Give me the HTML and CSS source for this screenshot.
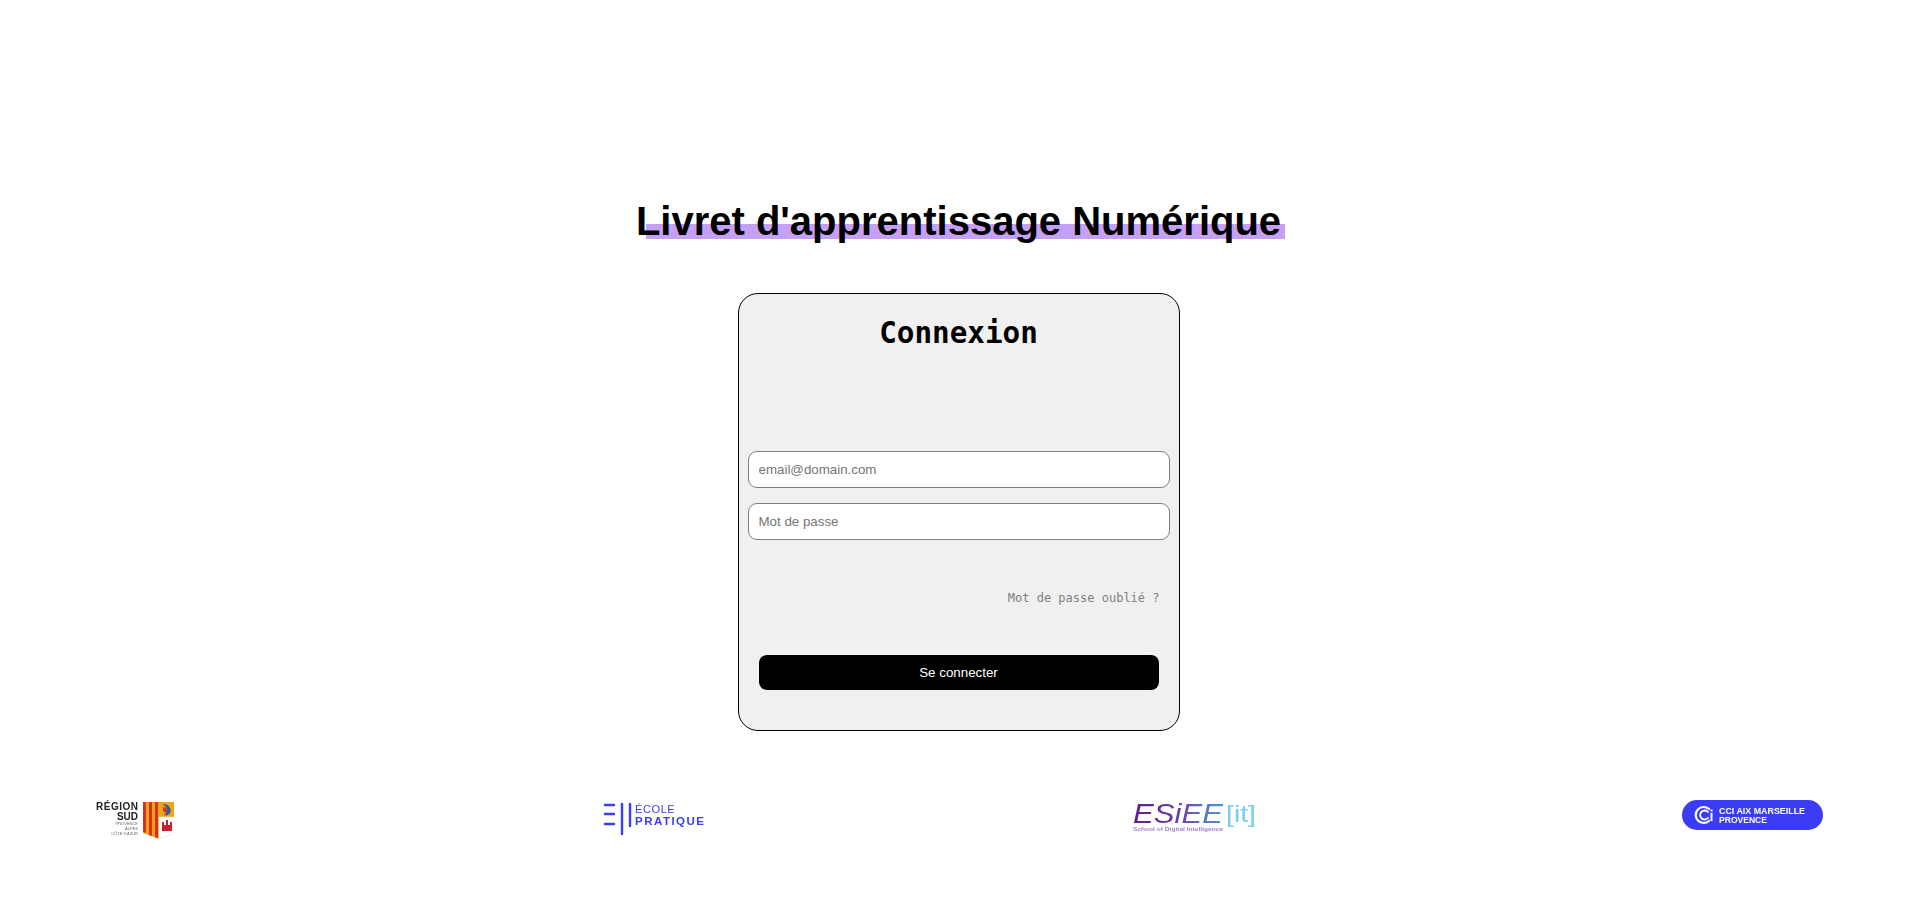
FILE: index.html
```html
<!DOCTYPE html>
<html lang="fr">
<head>
  <meta charset="UTF-8">
  <title>Livret d'apprentissage Numérique</title>
  <link rel="stylesheet" href="styles.css">
</head>
<body>
  <main class="page">
    <h1 class="title">Livret d'apprentissage Numérique</h1>

    <form class="card">
      <h2 class="card-title">Connexion</h2>
      <div class="fields">
        <input class="field" type="email" placeholder="email@domain.com">
        <input class="field" type="password" placeholder="Mot de passe">
      </div>
      <a class="forgot" href="#">Mot de passe oublié ?</a>
      <button class="submit" type="button">Se connecter</button>
    </form>
  </main>

  <footer class="partners">
    <!-- Region Sud -->
    <svg class="logo" width="80" height="40" viewBox="0 0 80 40">
      <text class="region-name" x="43" y="10" text-anchor="end" textLength="42">RÉGION</text>
      <text class="region-name" x="43" y="19.5" text-anchor="end">SUD</text>
      <text class="region-small" x="43" y="25" text-anchor="end">PROVENCE</text>
      <text class="region-small" x="43" y="30" text-anchor="end">ALPES</text>
      <text class="region-small" x="43" y="35" text-anchor="end">CÔTE D'AZUR</text>
      <path d="M48 2h31v31l-15 6-16-6z" fill="#f3a31a"/>
      <path d="M48 2h3v31l-3-1zM54 2h3v34l-3-1zM60 2h3v36l-3-1z" fill="#d8321f"/>
      <path d="M51 2h3v33l-3-1zM57 2h3v35l-3-1z" fill="#f2a01c"/>
      <path d="M64 17h15v16l-15 6z" fill="#fff" stroke="#eee" stroke-width="0.5"/>
      <path d="M67 25h10v6h-10z" fill="#c8202c"/>
      <path d="M67 22h2v3h-2zM71 20h2v5h-2zM75 22h2v3h-2z" fill="#c8202c"/>
      <path d="M67 5a6 6 0 0 1 8 8 5 5 0 0 1-6 2 6 6 0 0 0 3-5 5 5 0 0 0-5-5z" fill="#2c5aa0"/>
      <path d="M68 7a4 4 0 0 1 4 3 4 4 0 0 1-1 3l-3-2z" fill="#d8321f"/>
    </svg>

    <!-- Ecole Pratique -->
    <svg class="logo" width="102" height="40" viewBox="0 0 102 40">
      <g stroke="#3a3df5" stroke-width="2.4" stroke-linecap="round">
        <path d="M3 5h9M3 14h9M3 24h9"/>
        <path d="M20 4v30M28 4v22"/>
      </g>
      <text class="ecole" x="33" y="13">ÉCOLE</text>
      <text class="pratique" x="33" y="25" textLength="69">PRATIQUE</text>
    </svg>

    <!-- ESIEE-IT -->
    <svg class="logo" width="124" height="40" viewBox="0 0 124 40">
      <defs>
        <linearGradient id="esieeFill" x1="0" y1="0" x2="1" y2="0">
          <stop offset="0" stop-color="#5b1f8f"/>
          <stop offset="0.5" stop-color="#6a3fa8"/>
          <stop offset="1" stop-color="#4f9ad8"/>
        </linearGradient>
      </defs>
      <text class="esiee" x="2" y="23" textLength="90" lengthAdjust="spacingAndGlyphs" fill="url(#esieeFill)">ESiEE</text>
      <text class="esiee-it" x="95" y="22" textLength="30" lengthAdjust="spacingAndGlyphs">[it]</text>
      <text class="esiee-sub" x="2" y="31" textLength="90" lengthAdjust="spacingAndGlyphs">School of Digital Intelligence</text>
    </svg>

    <!-- CCI -->
    <svg class="logo" width="141" height="40" viewBox="0 0 141 40">
      <rect x="0" y="0" width="141" height="30" rx="15" fill="#3a3df5"/>
      <g fill="none" stroke="#fff" stroke-linecap="round">
        <path d="M27 9a8 8 0 1 0 0 12" stroke-width="2.2"/>
        <path d="M26 12a4.5 4.5 0 1 0 0 6" stroke-width="1.8"/>
      </g>
      <path d="M28.5 13h2v8h-2zM28.5 9.5h2v2h-2z" fill="#fff"/>
      <text class="cci" x="37" y="13.5" textLength="86" lengthAdjust="spacingAndGlyphs">CCI AIX MARSEILLE</text>
      <text class="cci" x="37" y="23" textLength="48" lengthAdjust="spacingAndGlyphs">PROVENCE</text>
    </svg>
  </footer>
</body>
</html>
```

FILE: styles.css
```css
body {
  margin: 0;
  background: #fff;
  color: #000;
  font-family: "Liberation Sans", Arial, sans-serif;
}
.page {
  display: flex;
  flex-direction: column;
  align-items: center;
  padding-top: 198px;
}
.title {
  position: relative;
  z-index: 0;
  margin: 0 0 49px 0;
  font-size: 40px;
  line-height: 46px;
  font-weight: bold;
}
.title::after {
  content: "";
  position: absolute;
  z-index: -1;
  left: 10px;
  right: -4px;
  bottom: 5px;
  height: 15px;
  background: #c6a0f6;
}
.card {
  box-sizing: border-box;
  width: 442px;
  height: 438px;
  padding: 22px 9px 0 9px;
  display: flex;
  flex-direction: column;
  background: #f0f0f0;
  border: 1px solid #000;
  border-radius: 20px;
}
.card-title {
  margin: 0;
  text-align: center;
  font-family: "DejaVu Sans Mono", monospace;
  font-size: 29.3px;
  line-height: 34px;
  font-weight: bold;
}
.fields {
  display: flex;
  flex-direction: column;
  gap: 15px;
  margin-top: 101px;
}
.field {
  box-sizing: border-box;
  width: 100%;
  height: 37px;
  padding: 0 10px;
  font-family: "Liberation Sans", Arial, sans-serif;
  font-size: 13.33px;
  background: #fff;
  border: 1px solid #808080;
  border-radius: 9px;
  outline: none;
}
.field::placeholder {
  color: #757575;
}
.forgot {
  align-self: flex-end;
  margin: 51px 10px 0 0;
  font-family: "DejaVu Sans Mono", monospace;
  font-size: 12px;
  line-height: 14px;
  color: #808080;
  text-decoration: none;
}
.submit {
  width: 400px;
  height: 35px;
  margin: 50px 0 0 11px;
  font-family: "Liberation Sans", Arial, sans-serif;
  font-size: 13.33px;
  color: #fff;
  background: #000;
  border: none;
  border-radius: 8px;
}
.partners {
  display: flex;
  justify-content: space-between;
  align-items: flex-start;
  padding: 69px 94px 0 95px;
}
.logo {
  display: block;
  filter: blur(0.35px);
}
.region-name {
  font: bold 10px "Liberation Sans", Arial, sans-serif;
  fill: #222;
}
.region-small {
  font: 4px "Liberation Sans", Arial, sans-serif;
  fill: #666;
}
.ecole {
  font: 11px "Liberation Sans", Arial, sans-serif;
  letter-spacing: 0.6px;
  fill: #3a3df5;
}
.pratique {
  font: bold 11.5px "Liberation Sans", Arial, sans-serif;
  fill: #3a3df5;
}
.esiee {
  font: italic 27px "Liberation Sans", Arial, sans-serif;
}
.esiee-it {
  font: 24px "Liberation Sans", Arial, sans-serif;
  fill: #79cdf0;
}
.esiee-sub {
  font: bold 6px "Liberation Sans", Arial, sans-serif;
  fill: #a583c9;
}
.cci {
  font: bold 9.5px "Liberation Sans", Arial, sans-serif;
  fill: #fff;
}
```
